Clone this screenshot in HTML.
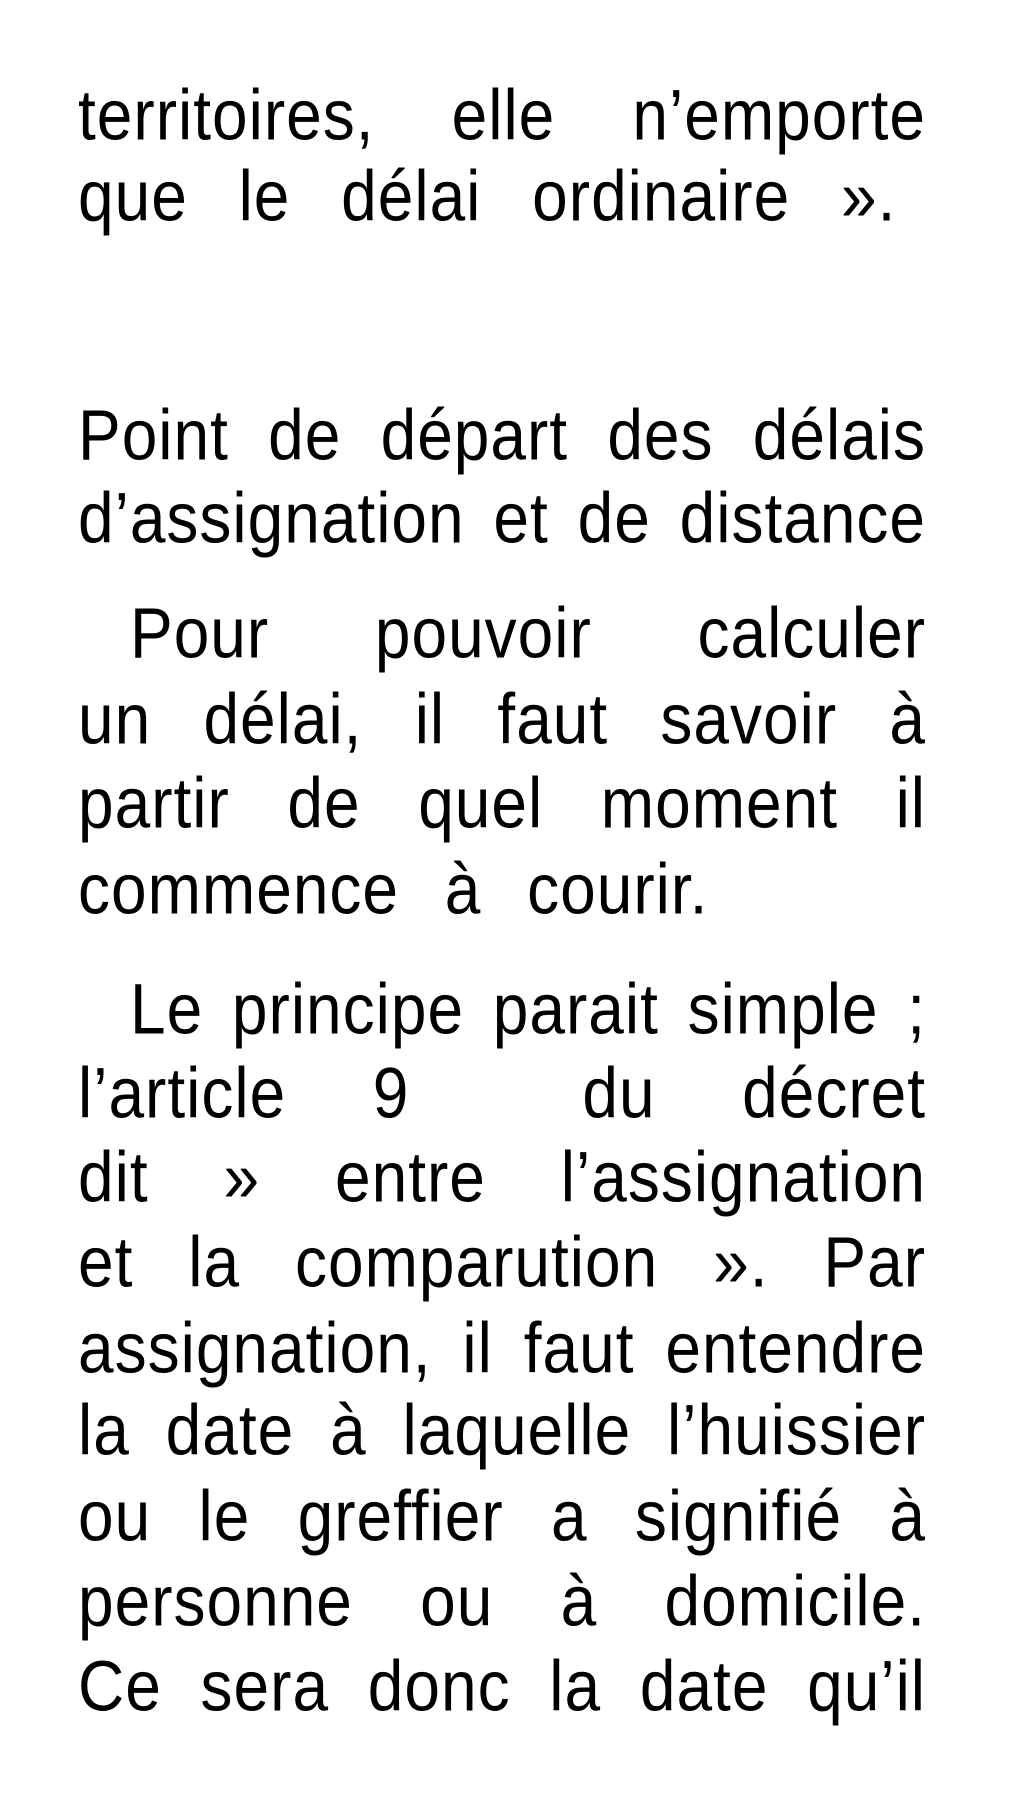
<!DOCTYPE html>
<html><head><meta charset="utf-8"><style>
html,body{margin:0;padding:0;background:#fff;}
body{width:1012px;height:1800px;position:relative;overflow:hidden;font-family:"Liberation Sans",sans-serif;color:#000;}
.l{position:absolute;left:78px;width:848px;height:70px;line-height:70px;font-size:64px;letter-spacing:1px;white-space:nowrap;transform:scaleY(1.12);transform-origin:50% 50%;}
.j{text-align:justify;text-align-last:justify;white-space:normal;}
.i{padding-left:52px;width:796px;}
</style></head><body>
<div class="l j" style="top:80px">territoires, elle n’emporte</div>
<div class="l" style="top:161px;word-spacing:32px">que le délai ordinaire ».</div>
<div class="l j" style="top:400px">Point de départ des délais</div>
<div class="l j" style="top:483px">d’assignation et de distance</div>
<div class="l j i" style="top:598px">Pour pouvoir calculer</div>
<div class="l j" style="top:684px">un délai, il faut savoir à</div>
<div class="l j" style="top:768px">partir de quel moment il</div>
<div class="l" style="top:854px;word-spacing:27px">commence à courir.</div>
<div class="l j i" style="top:974px">Le principe parait simple ;</div>
<div class="l j" style="top:1058px">l’article 9 &nbsp;du décret</div>
<div class="l j" style="top:1142px">dit » entre l’assignation</div>
<div class="l j" style="top:1227px">et la comparution ». Par</div>
<div class="l j" style="top:1313px">assignation, il faut entendre</div>
<div class="l j" style="top:1395px">la date à laquelle l’huissier</div>
<div class="l j" style="top:1481px">ou le greffier a signifié à</div>
<div class="l j" style="top:1566px">personne ou à domicile.</div>
<div class="l j" style="top:1651px">Ce sera donc la date qu’il</div>
</body></html>
